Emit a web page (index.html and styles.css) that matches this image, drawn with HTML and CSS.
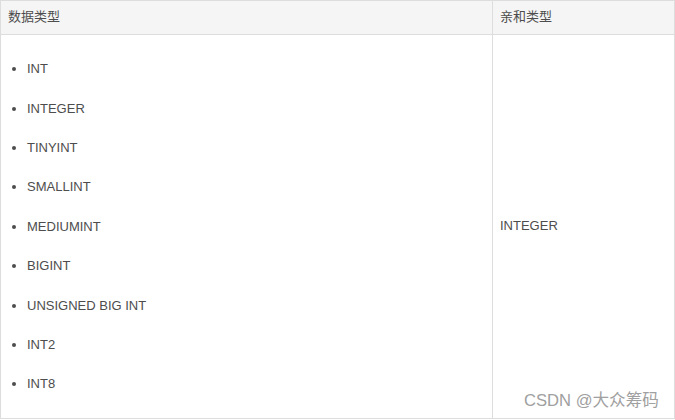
FILE: index.html
```html
<!DOCTYPE html>
<html lang="zh">
<head>
<meta charset="utf-8">
<link rel="stylesheet" href="styles.css">
</head>
<body>
<div class="wrap">
  <table class="tbl">
    <thead>
      <tr>
        <th class="c1">数据类型</th>
        <th class="c2">亲和类型</th>
      </tr>
    </thead>
    <tbody>
      <tr>
        <td class="c1">
          <ul class="types">
            <li>INT</li>
            <li>INTEGER</li>
            <li>TINYINT</li>
            <li>SMALLINT</li>
            <li>MEDIUMINT</li>
            <li>BIGINT</li>
            <li>UNSIGNED BIG INT</li>
            <li>INT2</li>
            <li>INT8</li>
          </ul>
        </td>
        <td class="c2">INTEGER</td>
      </tr>
    </tbody>
  </table>
  <div class="watermark">CSDN @大众筹码</div>
</div>
</body>
</html>
```

FILE: styles.css
```css
html, body {
  margin: 0;
  padding: 0;
  background: #fff;
}
.wrap {
  position: relative;
  width: 675px;
  height: 420px;
}
.tbl {
  border-collapse: collapse;
  width: 675px;
  font-family: "Liberation Sans", Arial, "Noto Sans CJK SC", sans-serif;
  font-size: 13px;
  color: #4d4d4d;
}
.tbl th, .tbl td {
  border: 1px solid #ddd;
  padding: 8px 8px 8px 7px;
  text-align: left;
  font-weight: normal;
}
.tbl th {
  background: #f5f5f5;
  height: 18px;
  line-height: 18px;
  padding-top: 7px;
  padding-bottom: 8px;
}
.tbl th.c1, .tbl td.c1 {
  width: 476px;
}
.tbl td {
  vertical-align: middle;
  height: 367px;
}
.tbl td.c2 {
  padding-top: 6px;
}
.types {
  margin: 0;
  padding: 6px 0 6px 19px;
  list-style: disc;
}
.types li {
  line-height: 39.375px;
}
.watermark {
  position: absolute;
  left: 524px;
  top: 391px;
  font-family: "Liberation Sans", Arial, "Noto Sans CJK SC", sans-serif;
  font-size: 16.6px;
  line-height: 20px;
  color: #a0a0a0;
  white-space: nowrap;
}
```
